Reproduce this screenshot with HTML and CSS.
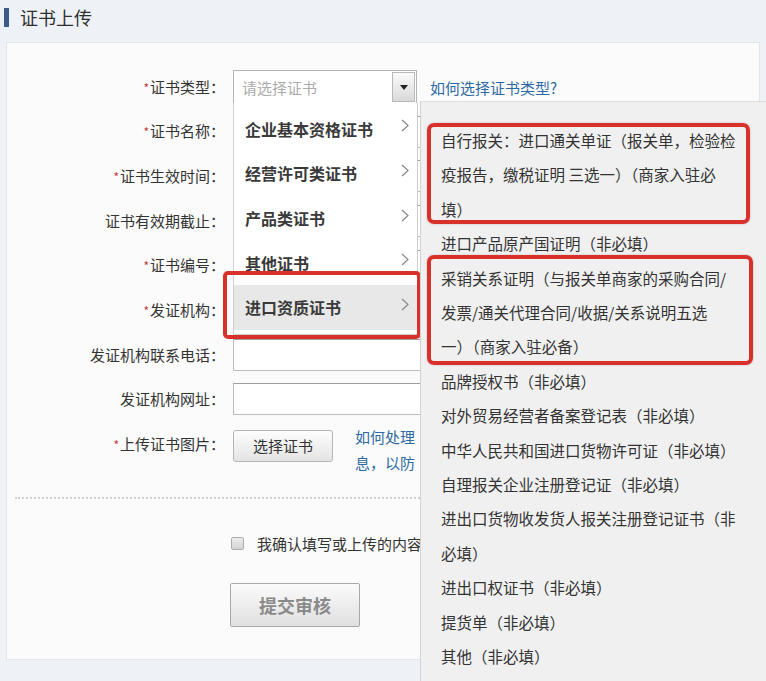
FILE: index.html
```html
<!DOCTYPE html>
<html lang="zh-CN">
<head>
<meta charset="utf-8">
<title>证书上传</title>
<link rel="stylesheet" href="styles.css">
</head>
<body>
<div class="titlebar"><span class="bar"></span><h1>证书上传</h1></div>
<div class="card">
  <div class="form">
    <div class="row">
      <label class="lbl"><i class="req">*</i>证书类型：</label>
      <div class="field">
        <div class="select">
          <span class="ph">请选择证书</span>
          <span class="arrow"><span class="tri"></span></span>
          <ul class="menu">
            <li>企业基本资格证书<svg class="chev" width="8" height="13" viewBox="0 0 8 13"><polyline points="1,1 7,6.5 1,12" fill="none" stroke="#888" stroke-width="1.2"/></svg></li>
            <li>经营许可类证书<svg class="chev" width="8" height="13" viewBox="0 0 8 13"><polyline points="1,1 7,6.5 1,12" fill="none" stroke="#888" stroke-width="1.2"/></svg></li>
            <li>产品类证书<svg class="chev" width="8" height="13" viewBox="0 0 8 13"><polyline points="1,1 7,6.5 1,12" fill="none" stroke="#888" stroke-width="1.2"/></svg></li>
            <li>其他证书<svg class="chev" width="8" height="13" viewBox="0 0 8 13"><polyline points="1,1 7,6.5 1,12" fill="none" stroke="#888" stroke-width="1.2"/></svg></li>
            <li class="active">进口资质证书<svg class="chev" width="8" height="13" viewBox="0 0 8 13"><polyline points="1,1 7,6.5 1,12" fill="none" stroke="#888" stroke-width="1.2"/></svg></li>
          </ul>
        </div>
        <a class="link help-type">如何选择证书类型?</a>
      </div>
    </div>
    <div class="row">
      <label class="lbl"><i class="req">*</i>证书名称：</label>
      <div class="field"><span class="text"></span></div>
    </div>
    <div class="row">
      <label class="lbl"><i class="req">*</i>证书生效时间：</label>
      <div class="field"><span class="text"></span></div>
    </div>
    <div class="row">
      <label class="lbl">证书有效期截止：</label>
      <div class="field"><span class="text"></span></div>
    </div>
    <div class="row">
      <label class="lbl"><i class="req">*</i>证书编号：</label>
      <div class="field"><span class="text"></span></div>
    </div>
    <div class="row">
      <label class="lbl"><i class="req">*</i>发证机构：</label>
      <div class="field"><span class="text"></span></div>
    </div>
    <div class="row">
      <label class="lbl">发证机构联系电话：</label>
      <div class="field"><span class="text"></span></div>
    </div>
    <div class="row">
      <label class="lbl">发证机构网址：</label>
      <div class="field"><span class="text"></span></div>
    </div>
    <div class="row upload">
      <label class="lbl"><i class="req">*</i>上传证书图片：</label>
      <div class="field">
        <button class="btn" type="button">选择证书</button>
        <p class="help">如何处理<br>息，以防</p>
      </div>
    </div>
  </div>
  <div class="sep"></div>
  <div class="confirm">
    <span class="check"></span>
    <span class="confirm-text">我确认填写或上传的内容</span>
  </div>
  <div class="actions">
    <button class="submit" type="button">提交审核</button>
  </div>
</div>
<ul class="submenu">
  <li class="hl hl1">自行报关：进口通关单证（报关单，检验检<br>疫报告，缴税证明 三选一）（商家入驻必<br>填）</li>
  <li>进口产品原产国证明（非必填）</li>
  <li class="hl hl2">采销关系证明（与报关单商家的采购合同/<br>发票/通关代理合同/收据/关系说明五选<br>一）（商家入驻必备）</li>
  <li>品牌授权书（非必填）</li>
  <li>对外贸易经营者备案登记表（非必填）</li>
  <li>中华人民共和国进口货物许可证（非必填）</li>
  <li>自理报关企业注册登记证（非必填）</li>
  <li>进出口货物收发货人报关注册登记证书（非<br>必填）</li>
  <li>进出口权证书（非必填）</li>
  <li>提货单（非必填）</li>
  <li>其他（非必填）</li>
</ul>
</body>
</html>
```

FILE: styles.css
```css
html, body {
  margin: 0;
  height: 681px;
  overflow: hidden;
}
body {
  position: relative;
  background: #eef1f6;
  font-family: "Noto Sans CJK SC", "Noto Sans", sans-serif;
  color: #333;
}
ul { list-style: none; margin: 0; padding: 0; }

.titlebar {
  height: 34px;
  display: flex;
  align-items: center;
  padding-left: 4px;
}
.titlebar .bar {
  width: 5px;
  height: 19px;
  background: #3b5b8e;
  margin-right: 11px;
}
.titlebar h1 {
  margin: 0;
  font-size: 18px;
  font-weight: normal;
  line-height: 20px;
  color: #2f2f2f;
}

.card {
  margin: 8px 6px 0 6px;
  height: 618px;
  box-sizing: border-box;
  background: #fbfbfb;
  border: 1px solid #e2e6ec;
  padding-top: 22px;
}

.row {
  display: grid;
  grid-template-columns: 218px 1fr;
  column-gap: 8px;
  height: 44.6px;
  align-items: center;
}
.row.upload {
  height: auto;
  align-items: start;
}
.row.upload .lbl { margin-top: 12px; }
.lbl {
  text-align: right;
  font-size: 15px;
  line-height: 20px;
  color: #333;
}
.req {
  color: #c8343a;
  font-style: normal;
  font-size: 12px;
  margin-right: 1px;
}
.field {
  display: flex;
  align-items: center;
  min-width: 0;
}
.row.upload .field { align-items: flex-start; }

.select {
  position: relative;
  flex: none;
  width: 184px;
  height: 34px;
  box-sizing: border-box;
  border: 1px solid #b5b5b5;
  background: #fff;
  display: flex;
  align-items: center;
}
.ph {
  padding-left: 8px;
  font-size: 15px;
  color: #ababab;
}
.arrow {
  margin-left: auto;
  margin-right: 1px;
  width: 23px;
  height: 30px;
  box-sizing: border-box;
  border: 1px solid #b9b9b9;
  background: linear-gradient(#fbfbfb, #d9d9d9);
  display: flex;
  align-items: center;
  justify-content: center;
}
.tri {
  width: 0;
  height: 0;
  border-left: 4px solid transparent;
  border-right: 4px solid transparent;
  border-top: 5px solid #222;
}
.link {
  color: #2d6aa5;
  font-size: 15px;
  cursor: pointer;
  white-space: nowrap;
}
.help-type { margin-left: 13px; }

.menu {
  position: absolute;
  top: 100%;
  left: -1px;
  width: 185px;
  box-sizing: border-box;
  background: #fff;
  border: 1px solid #d0d0d0;
  border-top: 0;
  padding: 3px 0 4px;
  z-index: 2;
}
.menu li {
  height: 44.7px;
  display: flex;
  align-items: center;
  justify-content: space-between;
  padding: 0 8px 0 11px;
  font-size: 16px;
  font-weight: bold;
  color: #3a3a3a;
}
.menu li.active {
  position: relative;
  background: #e8e8e8;
}
.menu li.active::after {
  content: "";
  position: absolute;
  left: -11px;
  right: -4px;
  top: -14px;
  bottom: -9px;
  border: 4px solid #d8312c;
  border-radius: 5px;
}
.chev { margin-top: -6px; }

.text {
  display: block;
  width: 260px;
  flex: none;
  height: 32px;
  box-sizing: border-box;
  border: 1px solid #bdbdbd;
  border-top-color: #9d9d9d;
  background: #fff;
}

.btn {
  flex: none;
  margin-top: 8px;
  width: 100px;
  height: 32px;
  border: 1px solid #b5b5b5;
  border-radius: 3px;
  background: linear-gradient(#fdfdfd, #e4e4e4);
  font-family: inherit;
  font-size: 15px;
  color: #333;
  padding: 0;
}
.help {
  margin: 2px 0 0 22px;
  white-space: nowrap;
  font-size: 15px;
  line-height: 26px;
  color: #2d6aa5;
}

.sep {
  margin: 21px 0 0 8px;
  border-top: 2px dotted #d0d0d0;
}

.confirm {
  margin-top: 35px;
  padding-left: 224px;
  display: flex;
  align-items: center;
  gap: 13px;
  font-size: 15px;
  line-height: 20px;
}
.check {
  flex: none;
  width: 13px;
  height: 13px;
  box-sizing: border-box;
  border: 1px solid #ababab;
  border-radius: 2px;
  background: linear-gradient(#ececec, #d3d3d3);
}
.confirm-text {
  white-space: nowrap;
}

.actions {
  margin-top: 29px;
  padding-left: 223px;
}
.submit {
  width: 130px;
  height: 44px;
  border: 1px solid #a8a8a8;
  border-radius: 2px;
  background: linear-gradient(#fbfbfb, #e0e0e0);
  color: #8a8a8a;
  font-family: inherit;
  font-weight: bold;
  font-size: 18px;
  padding: 0;
}

.submenu {
  position: absolute;
  left: 420px;
  top: 101px;
  right: 0;
  bottom: 0;
  background: #f0f0f0;
  border-left: 1px solid #d3d3d3;
  border-top: 1px solid #dedede;
  padding: 21px 30px 0 20px;
  font-size: 15.5px;
  line-height: 34.4px;
  color: #333;
  white-space: nowrap;
  z-index: 3;
}
.submenu .hl { position: relative; }
.submenu .hl::after {
  content: "";
  position: absolute;
  border: 4px solid #d8312c;
  border-radius: 7px;
  box-shadow: 0 0 2px rgba(120, 0, 0, 0.3);
}
.submenu .hl1::after {
  left: -14px;
  right: -14px;
  top: 0;
  bottom: 2px;
}
.submenu .hl2::after {
  left: -14px;
  right: -17px;
  top: -5.6px;
  bottom: -1.2px;
}
```
